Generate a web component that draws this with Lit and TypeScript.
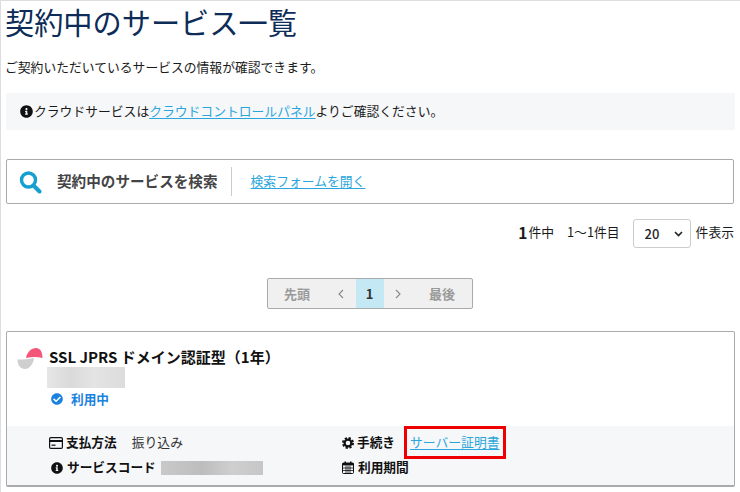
import { LitElement, html, css } from "lit";
import { customElement } from "lit/decorators.js";

const INFO = "M256 8C119 8 8 119.1 8 256c0 137 111 248 248 248s248-111 248-248C504 119.1 393 8 256 8zm0 110c23.2 0 42 18.8 42 42s-18.8 42-42 42-42-18.8-42-42 18.8-42 42-42zm56 254c0 6.6-5.4 12-12 12h-88c-6.6 0-12-5.4-12-12v-24c0-6.6 5.4-12 12-12h12v-64h-12c-6.6 0-12-5.4-12-12v-24c0-6.6 5.4-12 12-12h64c6.6 0 12 5.4 12 12v100h12c6.6 0 12 5.4 12 12v24z";
const CHECK = "M504 256c0 136.967-111.033 248-248 248S8 392.967 8 256 119.033 8 256 8s248 111.033 248 248zM227.314 387.314l184-184c6.248-6.248 6.248-16.379 0-22.627l-22.627-22.627c-6.248-6.249-16.379-6.249-22.628 0L216 308.118l-70.059-70.059c-6.248-6.248-16.379-6.248-22.628 0l-22.627 22.627c-6.248 6.248-6.248 16.379 0 22.627l104 104c6.249 6.249 16.379 6.249 22.628.001z";

const info = (size: number) => html`<svg width=${size} height=${size} viewBox="0 0 512 512"><path d=${INFO} fill="#111"></path></svg>`;

@customElement("app-root")
export class AppRoot extends LitElement {
  static styles = css`
    :host {
      display: block;
      width: 740px;
      height: 492px;
      box-sizing: border-box;
      overflow: hidden;
      background: #fff;
      border-top: 1px solid #ddd;
      border-left: 1px solid #ddd;
      padding: 0 5px 0 5px;
      font-family: "Noto Sans CJK JP", "Noto Sans", sans-serif;
      font-size: 12.8px;
      color: #1a1a1a;
      line-height: 1;
    }
    a { color: #2aa6dc; text-decoration: underline; text-underline-offset: 2px; }
    svg { display: block; flex: none; }
    h1 { margin: 0 0 0 -1px; height: 41px; font-size: 29.2px; font-weight: 400; color: #0d2c58; line-height: 41px; }
    .intro { margin: 17px 0 0 -1px; height: 16px; line-height: 16px; }
    .notice {
      margin-top: 18px; height: 37px; background: #f6f7f9;
      display: flex; align-items: center; gap: 1px; padding-left: 14px; width: 729px; box-sizing: border-box;
    }
    .search {
      margin-top: 29px; height: 45px; box-sizing: border-box; width: 728px;
      border: 1px solid #aaa; border-radius: 2px;
      display: flex; align-items: center; padding-left: 12px;
    }
    .search-title { margin-left: 15px; font-size: 14.6px; font-weight: 700; color: #444; }
    .divider { width: 1px; height: 29px; background: #ccc; margin: 0 19px 0 13px; }
    .count { margin-top: 15px; height: 29px; display: flex; justify-content: flex-end; align-items: center; width: 728px; }
    .count > span:not(.select-wrap), .count > b { position: relative; top: -1px; }
    .count b { font-size: 15.5px; margin-right: 1px; }
    .range { margin-left: 13px; }
    .select-wrap { position: relative; margin: 0 5px 0 13px; width: 58px; height: 29px; }
    select {
      appearance: none; width: 58px; height: 29px; border: 1px solid #ccc; border-radius: 3px;
      background: #fff; padding: 0 0 0 11px; margin: 0; font: 500 13px "Noto Sans CJK JP", sans-serif; color: #222;
    }
    .chev { position: absolute; right: 8px; top: 12px; pointer-events: none; }
    .pager-row { margin-top: 30px; display: flex; justify-content: center; width: 728px; }
    .pager {
      margin-left: -1px;
      height: 31px; box-sizing: border-box; width: 206px; border: 1px solid #aaa; border-radius: 2px; background: #f0f0f0;
      display: grid; grid-template-columns: 59px 29px 28px 29px 1fr; align-items: stretch;
      color: #999; font-weight: 700; font-size: 13px;
    }
    .pager > span { display: flex; align-items: center; justify-content: center; }
    .pager .cur { background: #c5e8f5; color: #333; font-size: 13px; }
    .card {
      margin-top: 22px; width: 729px; height: 156px; box-sizing: border-box; border: 1px solid #aaa; border-bottom-width: 2px; border-radius: 2px;
      display: flex; flex-direction: column;
    }
    .head { height: 94px; display: flex; padding: 15px 0 0 10px; box-sizing: border-box; }
    .logo { margin-right: 4px; }
    .body { display: flex; flex-direction: column; align-items: flex-start; }
    .name { font-size: 15px; font-weight: 700; color: #111; height: 21px; line-height: 21px; margin: -1px 0 0 2px; white-space: nowrap; }
    .mask { background: linear-gradient(90deg, #e6e6e6, #dadada 30%, #e4e4e4 60%, #dcdcdc); }
    .mask1 { width: 78px; height: 21px; }
    .status { display: flex; align-items: center; gap: 8px; margin: 3px 0 0 4px; color: #1a82e0; font-weight: 700; font-size: 12.7px; height: 16px; }
    .foot {
      flex: 1; background: #f6f7f9; padding-left: 42px;
      display: grid; grid-template-columns: 293px 1fr; grid-template-rows: 33px 17px; align-items: center;
    }
    .cell { display: flex; align-items: center; height: 100%; }
    .cell svg { margin-right: 3px; }
    .cell .cal { margin-right: 4px; }
    .info-wrap { margin: 0 1px 0 2px; }
    .label { font-weight: 700; color: #111; font-size: 12.7px; }
    .value { margin-left: 15px; color: #333; }
    .mask2 { width: 102px; height: 14px; margin-left: 5px; background: linear-gradient(90deg, #c9c9c9, #bdbdbd 40%, #cfcfcf 70%, #c6c6c6); }
    .hl { margin-left: 9px; border: 3px solid #ee0000; height: 33px; width: 102px; box-sizing: border-box; padding: 0 3px; display: flex; align-items: center; }
  `;

  render() {
    return html`
      <h1>契約中のサービス一覧</h1>
      <p class="intro">ご契約いただいているサービスの情報が確認できます。</p>
      <div class="notice">${info(13)}<span>クラウドサービスは<a href="#">クラウドコントロールパネル</a>よりご確認ください。</span></div>
      <div class="search">
        <svg width="23" height="24" viewBox="0 0 23 24"><circle cx="9.5" cy="10" r="7" fill="none" stroke="#15a0d0" stroke-width="3.4"></circle><path d="M14.5 15.5L20.5 21.5" stroke="#15a0d0" stroke-width="4" stroke-linecap="round"></path></svg>
        <span class="search-title">契約中のサービスを検索</span>
        <span class="divider"></span>
        <a href="#">検索フォームを開く</a>
      </div>
      <div class="count">
        <b>1</b><span>件中</span><span class="range">1～1件目</span>
        <span class="select-wrap">
          <select><option>20</option></select>
          <svg class="chev" width="9" height="6" viewBox="0 0 9 6"><path d="M1 1l3.5 3.5L8 1" fill="none" stroke="#222" stroke-width="1.6"></path></svg>
        </span>
        <span>件表示</span>
      </div>
      <div class="pager-row">
        <div class="pager">
          <span>先頭</span>
          <span><svg width="6" height="10" viewBox="0 0 6 10"><path d="M5 1L1 5l4 4" fill="none" stroke="#888" stroke-width="1.1"></path></svg></span>
          <span class="cur">1</span>
          <span><svg width="6" height="10" viewBox="0 0 6 10"><path d="M1 1l4 4-4 4" fill="none" stroke="#888" stroke-width="1.1"></path></svg></span>
          <span>最後</span>
        </div>
      </div>
      <div class="card">
        <div class="head">
          <svg class="logo" width="26" height="24" viewBox="0 0 26 24">
            <path d="M9 11C10 5 14.500 1 19 1c4 0 6.500 3.500 6.500 10C20 9.500 14 10 9 11z" fill="#f4567a"></path>
            <path d="M0.500 12.500C6 12.500 12 12 17 11C16.500 17 12.500 22 8 22C3.500 22 0.500 18 0.500 12.500z" fill="#cfcfcf"></path>
          </svg>
          <div class="body">
            <div class="name">SSL JPRS ドメイン認証型（1年）</div>
            <div class="mask mask1"></div>
            <div class="status">
              <svg width="12" height="12" viewBox="0 0 512 512"><path d=${CHECK} fill="#1a82e0"></path></svg>
              <span>利用中</span>
            </div>
          </div>
        </div>
        <div class="foot">
          <div class="cell">
            <svg width="14" height="12" viewBox="0 0 14 12"><rect x="0.6" y="0.6" width="12.8" height="10.8" rx="1.2" fill="none" stroke="#111" stroke-width="1.2"></rect><rect x="1" y="3" width="12" height="2" fill="#111"></rect><rect x="2.5" y="7.6" width="4" height="1.2" fill="#111"></rect></svg>
            <span class="label">支払方法</span><span class="value">振り込み</span>
          </div>
          <div class="cell">
            <svg width="12" height="12" viewBox="0 0 12 12"><circle cx="6" cy="6" r="3.4" fill="none" stroke="#111" stroke-width="2.2"></circle><circle cx="6" cy="6" r="5" fill="none" stroke="#111" stroke-width="2" stroke-dasharray="2.2 1.73"></circle></svg>
            <span class="label">手続き</span>
            <span class="hl"><a href="#">サーバー証明書</a></span>
          </div>
          <div class="cell">
            <span class="info-wrap">${info(12)}</span>
            <span class="label">サービスコード</span><span class="mask2"></span>
          </div>
          <div class="cell">
            <svg class="cal" width="12" height="13" viewBox="0 0 12 13"><rect x="0.5" y="2" width="11" height="10.5" rx="1" fill="none" stroke="#111"></rect><rect x="0.5" y="2" width="11" height="2.4" fill="#111"></rect><rect x="2.5" y="0.5" width="1.5" height="2.5" fill="#111"></rect><rect x="8" y="0.5" width="1.5" height="2.5" fill="#111"></rect><path d="M4 4.500v7.500M6 4.500v7.500M8 4.500v7.500M1 7h10M1 9.500h10" stroke="#111" stroke-width="0.8"></path></svg>
            <span class="label">利用期間</span>
          </div>
        </div>
      </div>
    `;
  }
}
